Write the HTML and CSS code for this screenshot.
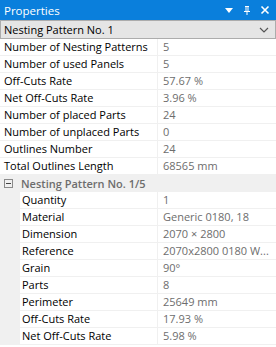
FILE: index.html
```html
<!DOCTYPE html>
<html>
<head>
  <title>Properties</title>
  <link rel="stylesheet" href="styles.css">
</head>
<body>

<!-- Title bar -->
<div class="titlebar">
  <span class="title">Properties</span>
  <div class="tools">
    <svg width="10" height="10" viewBox="0 0 10 10"><path d="M1 3h8L5 8z" fill="#fff"/></svg>
    <svg width="10" height="10" viewBox="0 0 10 10"><path d="M3 1h4v1H6.5v4H8v1H5.5v3h-1V7H2V6h1.5V2H3z M4.5 2v4h1V2z" fill="#fff"/></svg>
    <svg width="10" height="10" viewBox="0 0 10 10"><path d="M1.5 1.5l7 7M8.5 1.5l-7 7" stroke="#fff" stroke-width="1.6"/></svg>
  </div>
</div>

<!-- Selector -->
<div class="combo">
  <span>Nesting Pattern No. 1</span>
  <svg width="10" height="6" viewBox="0 0 10 6"><path d="M1 1l4 4 4-4" fill="none" stroke="#555" stroke-width="1.2"/></svg>
</div>

<!-- Property grid -->
<div class="grid">
  <div class="row"><div class="label">Number of Nesting Patterns</div><div class="value">5</div></div>
  <div class="row"><div class="label">Number of used Panels</div><div class="value">5</div></div>
  <div class="row"><div class="label">Off-Cuts Rate</div><div class="value">57.67 %</div></div>
  <div class="row"><div class="label">Net Off-Cuts Rate</div><div class="value">3.96 %</div></div>
  <div class="row"><div class="label">Number of placed Parts</div><div class="value">24</div></div>
  <div class="row"><div class="label">Number of unplaced Parts</div><div class="value">0</div></div>
  <div class="row"><div class="label">Outlines Number</div><div class="value">24</div></div>
  <div class="row"><div class="label">Total Outlines Length</div><div class="value">68565 mm</div></div>

  <div class="group">
    <svg class="toggle" width="9" height="9" viewBox="0 0 9 9"><rect x="0.5" y="0.5" width="8" height="8" fill="none" stroke="#8a8a8a"/><path d="M2 4.5h5" stroke="#444"/></svg>
    <span>Nesting Pattern No. 1/5</span>
  </div>
  <div class="row sub"><div class="label">Quantity</div><div class="value">1</div></div>
  <div class="row sub"><div class="label">Material</div><div class="value">Generic 0180, 18</div></div>
  <div class="row sub"><div class="label">Dimension</div><div class="value">2070 × 2800</div></div>
  <div class="row sub"><div class="label">Reference</div><div class="value">2070x2800 0180 W...</div></div>
  <div class="row sub"><div class="label">Grain</div><div class="value">90°</div></div>
  <div class="row sub"><div class="label">Parts</div><div class="value">8</div></div>
  <div class="row sub"><div class="label">Perimeter</div><div class="value">25649 mm</div></div>
  <div class="row sub"><div class="label">Off-Cuts Rate</div><div class="value">17.93 %</div></div>
  <div class="row sub"><div class="label">Net Off-Cuts Rate</div><div class="value">5.98 %</div></div>
</div>

</body>
</html>
```

FILE: styles.css
```css
body {
  margin: 0;
  font-family: 'Open Sans', sans-serif;
  font-size: 11px;
  background: #fff;
  width: 276px;
}
.titlebar {
  display: flex;
  align-items: center;
  justify-content: space-between;
  height: 20px;
  background: #0a7fdc;
  color: white;
  padding: 0 6px 0 4px;
  box-sizing: border-box;
}
.title {
  font-size: 11.5px;
}
.tools {
  display: flex;
  gap: 8px;
}
.combo {
  display: flex;
  align-items: center;
  justify-content: space-between;
  height: 19px;
  box-sizing: border-box;
  background: #e5e5e5;
  border: 1px solid #acacac;
  padding: 0 6px 0 3px;
  color: #000;
}
.row {
  display: flex;
  height: 17px;
  box-sizing: border-box;
  border-bottom: 1px solid #f0f0f0;
  line-height: 16px;
}
.label {
  width: 158px;
  padding-left: 4px;
  box-sizing: border-box;
  border-right: 1px solid #f0f0f0;
  color: #000;
  white-space: nowrap;
  overflow: hidden;
}
.value {
  padding-left: 5px;
  color: #6d6d6d;
  white-space: nowrap;
}
.row.sub {
  border-left: 20px solid #f0f0f0;
}
.row.sub .label {
  width: 138px;
  padding-left: 2px;
}
.group {
  display: flex;
  align-items: center;
  gap: 8px;
  height: 17px;
  background: #f0f0f0;
  padding-left: 4px;
  font-weight: 600;
  color: #6d6d6d;
}
.toggle {
  display: block;
}
```
